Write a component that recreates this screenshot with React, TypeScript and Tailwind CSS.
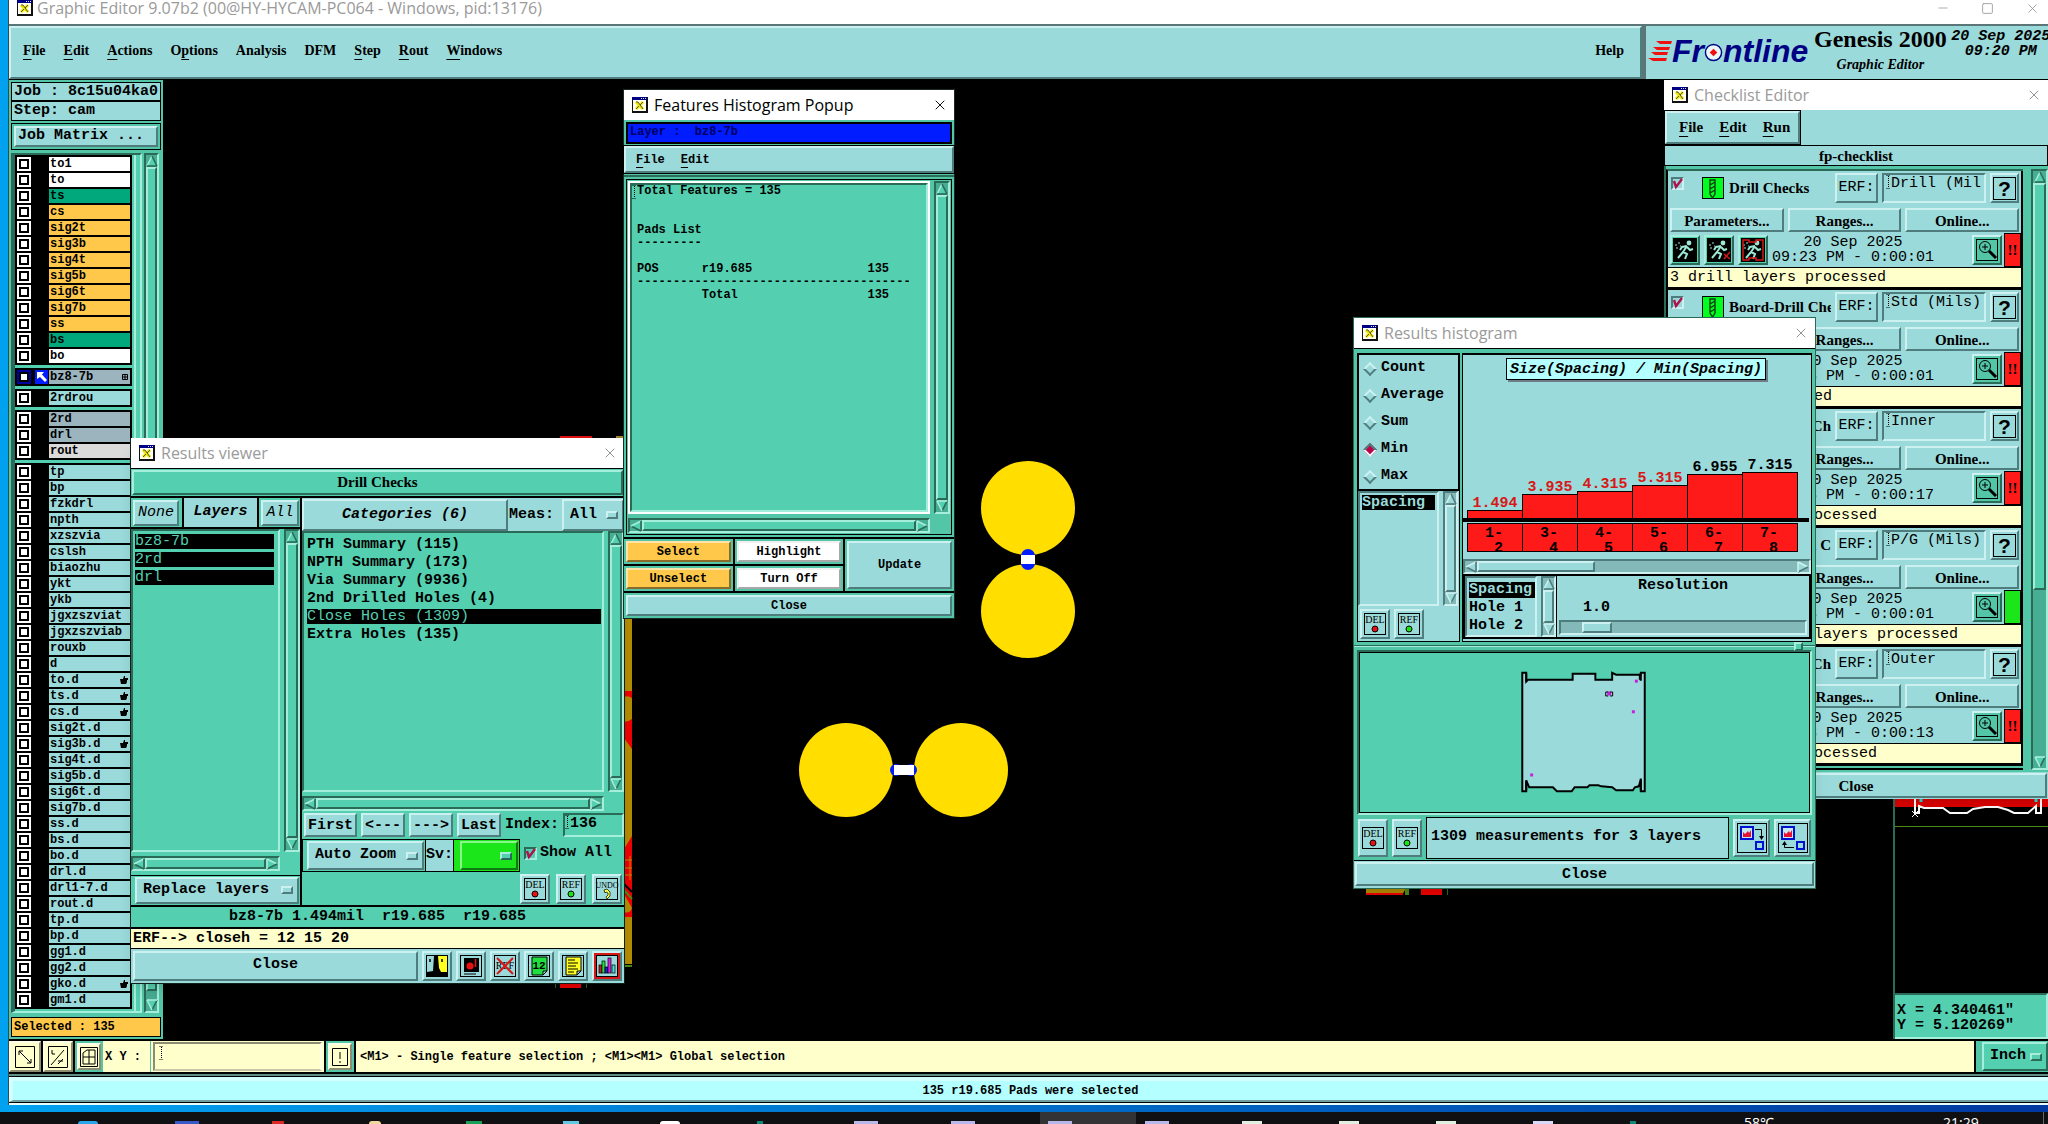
import React from 'react';
import { Minus, Square, X } from 'lucide-react';

const cyanUp = 'border-2 border-t-[#cdf1f1] border-l-[#cdf1f1] border-b-[#4f7d7d] border-r-[#4f7d7d] bg-[#9bdada]';
const cyanDown = 'border-2 border-t-[#4f7d7d] border-l-[#4f7d7d] border-b-[#cdf1f1] border-r-[#cdf1f1] bg-[#9bdada]';
const greenUp = 'border-2 border-t-[#a5eedb] border-l-[#a5eedb] border-b-[#2a6b58] border-r-[#2a6b58] bg-[#54d0b0]';
const greenDown = 'border-2 border-t-[#2a6b58] border-l-[#2a6b58] border-b-[#a5eedb] border-r-[#a5eedb] bg-[#54d0b0]';
const creamUp = 'border-2 border-t-[#ffffe8] border-l-[#ffffe8] border-b-[#8d8d72] border-r-[#8d8d72] bg-[#ffffcc]';
const orangeUp = 'border-2 border-t-[#ffe3a8] border-l-[#ffe3a8] border-b-[#8a6b2a] border-r-[#8a6b2a] bg-[#ffc84b]';
const whiteUp = 'border-2 border-t-[#f0f0f0] border-l-[#f0f0f0] border-b-[#a8a8a8] border-r-[#a8a8a8] bg-white';
const serif = "font-['Liberation_Serif',serif] font-bold";

type Tone = 'green' | 'cyan';

const Arrow: React.FC<{ dir: 'up' | 'down' | 'left' | 'right'; tone: Tone }> = ({ dir, tone }) => {
  const turn = { up: 0, right: 90, down: 180, left: 270 }[dir];
  const dark = tone === 'green' ? '#2a6b58' : '#4f7d7d';
  const light = tone === 'green' ? '#a5eedb' : '#cdf1f1';
  return (
    <svg viewBox="0 0 12 12" className="size-3 shrink-0" aria-hidden="true">
      <g transform={`rotate(${turn} 6 6)`}>
        <path d="M6 1 L11 11 H1 Z" fill={tone === 'green' ? '#54d0b0' : '#9bdada'} />
        <path d="M6 1 L1 11" stroke={dir === 'up' || dir === 'right' ? light : dark} strokeWidth="1.6" />
        <path d="M6 1 L11 11" stroke={dir === 'left' || dir === 'down' ? light : dark} strokeWidth="1.6" />
        <path d="M1 11 H11" stroke={dir === 'up' || dir === 'left' ? dark : light} strokeWidth="1.6" />
      </g>
    </svg>
  );
};

const VScroll: React.FC<{ tone?: Tone; thumb?: string; className?: string }> = ({ tone = 'green', thumb = 'h-full', className = 'w-4' }) => (
  <div className={`flex shrink-0 flex-col items-center ${tone === 'green' ? greenDown : cyanDown} ${className}`}>
    <div className={`flex w-full flex-1 flex-col items-center ${tone === 'green' ? 'bg-[#47ad93]' : 'bg-[#84b9b9]'}`}>
      <Arrow dir="up" tone={tone} />
      <div className="w-full flex-1">
        <div className={`w-full ${thumb} ${tone === 'green' ? greenUp : cyanUp}`} />
      </div>
      <Arrow dir="down" tone={tone} />
    </div>
  </div>
);

const HScroll: React.FC<{ tone?: Tone; thumb?: string; className?: string }> = ({ tone = 'green', thumb = 'w-full', className = '' }) => (
  <div className={`flex h-[15px] shrink-0 ${tone === 'green' ? greenDown : cyanDown} ${className}`}>
    <div className={`flex h-full flex-1 items-center ${tone === 'green' ? 'bg-[#47ad93]' : 'bg-[#84b9b9]'}`}>
      <Arrow dir="left" tone={tone} />
      <div className="h-full flex-1">
        <div className={`h-full ${thumb} ${tone === 'green' ? greenUp : cyanUp}`} />
      </div>
      <Arrow dir="right" tone={tone} />
    </div>
  </div>
);

const AppIcon = () => (
  <svg viewBox="0 0 16 16" className="size-4 shrink-0" aria-hidden="true">
    <rect width="16" height="16" fill="#111" />
    <rect width="15" height="3" fill="#000084" />
    <path d="M9 1.5 H14" stroke="#ddd" strokeDasharray="1 1" />
    <rect x="1" y="3" width="13" height="11" fill="#fffff4" />
    <path d="M4 5 L11 12 M11 5 L4 12" stroke="#f0e800" strokeWidth="3" />
    <path d="M4 5 H6 L11 12 M11 5 L8 8 M7 9 L4 12" fill="none" stroke="#333" strokeWidth="0.8" />
  </svg>
);

const TitleBar: React.FC<{ title: string; active?: boolean }> = ({ title, active }) => (
  <div className="flex h-[30px] items-center gap-1.5 bg-white pr-1.5 pl-2 font-['Open_Sans',sans-serif] text-[16px] font-normal">
    <AppIcon />
    <span className={`flex-1 whitespace-nowrap ${active ? 'text-black' : 'text-[#9a9a9a]'}`}>{title}</span>
    <button aria-label="Close window" className={active ? 'text-black' : 'text-[#8a8a8a]'}>
      <X size={16} strokeWidth={1.4} />
    </button>
  </div>
);

const Knob: React.FC<{ tone?: Tone }> = ({ tone = 'cyan' }) => (
  <span className={`h-2 w-3 shrink-0 ${tone === 'green' ? greenUp : cyanUp}`} />
);

const OptionMenu: React.FC<{ label: string; value: string; look?: string; tone?: Tone; className?: string }> = ({
  label, value, look = cyanUp, tone = 'cyan', className = '',
}) => (
  <div className={`flex items-center pr-1 pl-1.5 ${look} ${className}`}>
    <select aria-label={label} className="min-w-0 flex-1 appearance-none bg-transparent text-[15px] font-bold">
      <option>{value}</option>
    </select>
    <Knob tone={tone} />
  </div>
);

const Beam = () => (
  <svg viewBox="0 0 5 14" className="h-3.5 w-[5px] shrink-0" aria-hidden="true">
    <path d="M0.5 0.5 H4.5 M0.5 13.5 H4.5 M2.5 1 V13" stroke="#000" strokeWidth="1" strokeDasharray="1 1" />
  </svg>
);

const Tick: React.FC<{ label: string; look: string }> = ({ label, look }) => (
  <span className="grid shrink-0">
    <input type="checkbox" defaultChecked aria-label={label} className={`col-start-1 row-start-1 size-[13px] appearance-none ${look}`} />
    <svg viewBox="0 0 13 13" className="pointer-events-none col-start-1 row-start-1 size-[13px]" aria-hidden="true">
      <path d="M3 4 L5 10 L11 2" fill="none" stroke="#b0104c" strokeWidth="2.4" />
    </svg>
  </span>
);

const TagIcon: React.FC<{ tag: string; dot?: string }> = ({ tag, dot }) => (
  <svg viewBox="0 0 24 24" className="size-6" aria-hidden="true">
    <rect x="1.5" y="1.5" width="21" height="21" fill="none" stroke="#000" />
    <text x="12" y="11" textAnchor="middle" fontSize={dot ? 10 : 8} className="font-['Liberation_Serif',serif] font-normal">{tag}</text>
    {dot ? (
      <circle cx="12" cy="17" r="3" fill={dot} stroke="#000" />
    ) : (
      <path d="M9 13 L12 12 L15 15 V19 L12 22 L11 20 L13 18 V16 L11 15 L10 16 Z" fill="#ffff3c" stroke="#000" strokeWidth="0.7" />
    )}
  </svg>
);

const IconButton: React.FC<{ label: string; className?: string; children: React.ReactNode }> = ({ label, className = 'h-[30px] w-[30px]', children }) => (
  <button aria-label={label} className={`flex shrink-0 items-center justify-center ${cyanUp} ${className}`}>
    {children}
  </button>
);

// '_' marks the mnemonic letter of an entry
const Menu: React.FC<{ items: string[]; className: string }> = ({ items, className }) => (
  <nav className={`flex items-center ${className}`}>
    {items.map((item) => {
      const at = item.indexOf('_');
      if (at < 0) return <button key={item}>{item}</button>;
      return (
        <button key={item}>
          {item.slice(0, at)}<u className="underline-offset-4">{item[at + 1]}</u>{item.slice(at + 2)}
        </button>
      );
    })}
  </nav>
);

/* ---------- layer list ---------- */

interface Layer { name: string; color: string; hand?: boolean; active?: boolean }

const white = 'bg-white';
const mask = 'bg-[#00a87c]';
const signal = 'bg-[#ffc84b]';
const drill = 'bg-[#9bb4be]';
const misc = 'bg-[#9bdada]';

const groups: Layer[][] = [
  [
    { name: 'to1', color: white }, { name: 'to', color: white }, { name: 'ts', color: mask },
    { name: 'cs', color: signal }, { name: 'sig2t', color: signal }, { name: 'sig3b', color: signal },
    { name: 'sig4t', color: signal }, { name: 'sig5b', color: signal }, { name: 'sig6t', color: signal },
    { name: 'sig7b', color: signal }, { name: 'ss', color: signal }, { name: 'bs', color: mask },
    { name: 'bo', color: white },
  ],
  [{ name: 'bz8-7b', color: drill, active: true }],
  [{ name: '2rdrou', color: misc }],
  [{ name: '2rd', color: drill }, { name: 'drl', color: drill }, { name: 'rout', color: 'bg-[#dadada]' }],
  [
    'tp', 'bp', 'fzkdrl', 'npth', 'xzszvia', 'cslsh', 'biaozhu', 'ykt', 'ykb', 'jgxzszviat', 'jgxzszviab',
    'rouxb', 'd', 'to.d', 'ts.d', 'cs.d', 'sig2t.d', 'sig3b.d', 'sig4t.d', 'sig5b.d', 'sig6t.d', 'sig7b.d',
    'ss.d', 'bs.d', 'bo.d', 'drl.d', 'drl1-7.d', 'rout.d', 'tp.d', 'bp.d', 'gg1.d', 'gg2.d', 'gko.d', 'gm1.d',
  ].map((name) => ({ name, color: misc, hand: ['to.d', 'ts.d', 'cs.d', 'sig3b.d', 'gko.d'].includes(name) })),
];

const LayerRow: React.FC<{ layer: Layer }> = ({ layer }) => (
  <li className="flex h-4 items-center">
    <input
      type="checkbox"
      aria-label={layer.name}
      className={`mr-1 size-3.5 appearance-none border-2 bg-white shadow-[inset_0_0_0_2px_#000] ${layer.active ? 'border-[#0000a0]' : 'border-white'}`}
    />
    {layer.active ? (
      <span className="mr-px flex h-3.5 w-[13px] bg-[#001cff]">
        <svg viewBox="0 0 13 14" className="h-3.5 w-[13px]" aria-hidden="true">
          <path d="M2 2 H9 L7 4.5 L12 10 L10 12 L5 7 L2 9 Z" fill="#fff" />
        </svg>
      </span>
    ) : (
      <span className="w-3.5" />
    )}
    <span className={`flex h-3.5 flex-1 items-center justify-between overflow-hidden pl-px text-[12px] leading-[14px] ${layer.color}`}>
      {layer.name}
      {layer.hand && (
        <svg viewBox="0 0 8 8" className="mr-0.5 size-2" aria-hidden="true">
          <path d="M0 3 L3 3 L4 0 H5 L5 2 H8 V4 H7 V6 L6 8 H1 Z" />
        </svg>
      )}
      {layer.active && (
        <svg viewBox="0 0 6 6" className="mr-0.5 size-1.5" aria-hidden="true">
          <path d="M0.5 0.5 H5.5 V5.5 H0.5 Z M3 0.5 V5.5 M0.5 3 H5.5" fill="none" stroke="#000" />
        </svg>
      )}
    </span>
  </li>
);

const Sidebar = () => (
  <aside className="flex w-[154px] shrink-0 flex-col bg-[#54c6a8] px-0.5 pt-0.5 font-bold">
    <div className="h-[19px] border border-black bg-[#9bdada] pl-0.5 text-[15px] leading-[17px] whitespace-nowrap">Job : 8c15u04ka0</div>
    <div className="h-5 border border-black bg-[#9bdada] pl-0.5 text-[15px] leading-[17px]">Step: cam</div>
    <div className="mt-0.5 h-[27px] border border-black p-0.5">
      <button className={`flex size-full items-center pl-0.5 text-[15px] ${cyanUp}`}>Job Matrix ...</button>
    </div>
    <div className="mt-[3px] flex min-h-0 flex-1 gap-0.5">
      <div className={`min-w-0 flex-1 overflow-hidden ${greenDown} border-l-4`}>
        <div className="mr-1 flex h-full flex-col gap-[3px] border-r-2 border-[#a5eedb] pr-0.5">
          {groups.map((group) => (
            <ul key={group[0].name} className="bg-black px-0.5 py-px">
              {group.map((layer) => <LayerRow key={layer.name} layer={layer} />)}
            </ul>
          ))}
        </div>
      </div>
      <VScroll thumb="h-[99%]" className="mr-0.5 w-[15px]" />
    </div>
    <div className="mt-1 mb-0.5 h-5 border border-black bg-[#ffc84b] pl-0.5 text-[12px] leading-[18px]">Selected : 135</div>
  </aside>
);

/* ---------- main canvas ---------- */

const Canvas = () => (
  <div className="relative min-w-0 flex-1 overflow-hidden bg-black">
    <svg className="absolute inset-0 size-full" aria-hidden="true">
      <g transform="translate(-163 -80)">
        <g fill="#ffde00">
          <circle cx="1028" cy="508" r="47" />
          <circle cx="1028" cy="611" r="47" />
          <circle cx="846" cy="770" r="47" />
          <circle cx="961" cy="770" r="47" />
        </g>
        <circle cx="1028" cy="556" r="7" fill="#001cff" />
        <circle cx="1028" cy="563" r="7" fill="#001cff" />
        <rect x="1021" y="555" width="14" height="9" fill="#fff" />
        <circle cx="896" cy="770" r="6" fill="#001cff" />
        <circle cx="911" cy="770" r="6" fill="#001cff" />
        <rect x="894" y="765" width="20" height="10" fill="#fff" />
        <rect x="560" y="436" width="32" height="3" fill="#e01010" />
        <rect x="616" y="436" width="8" height="3" fill="#a08030" />
        <rect x="618" y="600" width="14" height="364" fill="#b48c00" />
        <g fill="#e00">
          <path d="M624 691 H632 V698 Q628 695 624 697 Z" />
          <path d="M624 722 Q628 722 632 719 V749 L624 738 Z" />
          <path d="M624 849 L632 836 V917 H624 V912 Q630 914 632 908 L624 894 Z" />
        </g>
        <path d="M624 860 H632 M624 868 H632 M630 856 V880 M624 875 H632" stroke="#b48c00" />
        <path d="M624 884 L632 892" stroke="#000" strokeWidth="2" />
        <path d="M624 890 L632 899 M618 966 H632" stroke="#4c8a14" strokeWidth="2" />
        <rect x="560" y="975" width="21" height="13" fill="#f00000" />
        <path d="M555.5 975 V988 M586.5 975 V988" stroke="#2e6a10" />
        <path d="M1366 880 H1405 V890 L1402 895 H1366 Z" fill="#b48c00" />
        <rect x="1366" y="893" width="37" height="2" fill="#e00" />
        <rect x="1405" y="880" width="4" height="15" fill="#4c8a14" />
        <rect x="1421" y="880" width="21" height="15" fill="#f00000" />
        <path d="M1447.5 880 V895" stroke="#2e6a10" />
      </g>
    </svg>
  </div>
);

const Overview = () => (
  <div className="flex w-[155px] shrink-0 flex-col border-l-2 border-[#2a6b58] bg-black">
    <svg className="min-h-0 w-full flex-1" aria-hidden="true">
      <g transform="translate(-1895 -80)">
        <rect x="1895" y="780" width="153" height="27" fill="#e00000" />
        <path d="M1921 780 V802 M2036 780 V802" stroke="#30d8d8" strokeWidth="3" />
        <path
          d="M1915 780 V813 H1919 V806 L1924 808 H1943 L1950 813 H1967 L1973 809 L1985 807 H1998 L2008 810 L2014 813 H2028 L2036 806 V813 H2041 V780"
          fill="none" stroke="#fff" strokeWidth="2"
        />
        <path d="M1912 811 L1918 817 M1918 811 L1912 817" stroke="#fff" />
        <path d="M1895 826.5 H2048" stroke="#4c8a14" />
      </g>
    </svg>
    <div className={`h-[46px] pt-2 pl-0.5 text-[15px] leading-[15px] font-bold whitespace-pre ${greenDown} border-l-0`}>
      X = 4.340461&quot;{'\n'}Y = 5.120269&quot;
    </div>
  </div>
);

/* ---------- windows ---------- */

const report = [
  'Total Features = 135', '', '', 'Pads List', '---------', '',
  'POS      r19.685                135',
  '--------------------------------------',
  '         Total                  135',
].join('\n');

const FeaturesPopup = () => (
  <section className="absolute top-[89px] left-[623px] w-[332px] border border-[#1a2a26] bg-[#54c6a8] text-[12px] font-bold">
    <TitleBar title="Features Histogram Popup" active />
    <div className="p-0.5">
      <div className="h-[22px] border-2 border-black bg-[#001cff] pl-0.5 leading-[17px] whitespace-pre text-[#000060]">Layer :  bz8-7b</div>
    </div>
    <div className={`h-[27px] outline outline-black ${cyanUp}`}>
      <Menu items={['_File', '_Edit']} className="h-full gap-4 pl-2.5 text-[12px]" />
    </div>
    <div className="mt-0.5 border-t-2 border-t-[#2a6b58] p-0.5">
      <div className="border border-black p-px">
        <div className="flex h-[333px] gap-1">
          <div className="min-w-0 flex-1 border-2 border-white">
            <div className={`flex size-full ${greenDown}`}>
              <Beam />
              <pre className="font-['Liberation_Mono',monospace] leading-[13px]">{report}</pre>
            </div>
          </div>
          <VScroll />
        </div>
        <HScroll className="mt-1 mr-5" />
      </div>
    </div>
    <div className="grid grid-cols-3 gap-x-0.5 border-y-2 border-black bg-black">
      <div className="grid gap-y-0.5">
        <div className="bg-[#54c6a8] p-0.5"><button className={`h-[21px] w-full ${orangeUp}`}>Select</button></div>
        <div className="bg-[#54c6a8] p-0.5"><button className={`h-[21px] w-full ${orangeUp}`}>Unselect</button></div>
      </div>
      <div className="grid gap-y-0.5">
        <div className="bg-[#54c6a8] p-0.5"><button className={`h-[21px] w-full ${whiteUp}`}>Highlight</button></div>
        <div className="bg-[#54c6a8] p-0.5"><button className={`h-[21px] w-full ${whiteUp}`}>Turn Off</button></div>
      </div>
      <div className="flex bg-[#54c6a8] p-0.5"><button className={`flex-1 ${cyanUp}`}>Update</button></div>
    </div>
    <div className="p-0.5"><button className={`h-[21px] w-full ${cyanUp}`}>Close</button></div>
  </section>
);

const categories = ['PTH Summary (115)', 'NPTH Summary (173)', 'Via Summary (9936)', '2nd Drilled Holes (4)', 'Close Holes (1309)', 'Extra Holes (135)'];

const ResultsViewer = () => (
  <section className="absolute top-[438px] left-[130px] w-[495px] border-x border-b border-[#12201c] bg-[#54d0b0] text-[15px] font-bold shadow-lg">
    <TitleBar title="Results viewer" />
    <div className="border-t border-b-2 border-black p-px">
      <div className={`h-[25px] text-center leading-[21px] ${serif} ${greenUp}`}>Drill Checks</div>
    </div>
    <div className="flex border-b-2 border-black">
      <div className="flex w-[171px] flex-col border-r-2 border-black">
        <div className="flex h-[31px] border-b-2 border-black">
          <div className="pt-0.5 pr-[3px] pl-0.5"><button className={`h-[26px] w-[46px] font-normal italic ${cyanUp}`}>None</button></div>
          <div className="flex flex-1 items-center justify-center border-x-2 border-black bg-[#9bdada] italic">Layers</div>
          <div className="pt-0.5 pr-px pl-0.5"><button className={`h-[26px] w-[38px] font-normal italic ${cyanUp}`}>All</button></div>
        </div>
        <div className="flex h-[323px] gap-1">
          <ul className={`flex min-w-0 flex-1 flex-col gap-[3px] pt-[3px] pr-1 pl-0.5 ${greenDown}`}>
            {['bz8-7b', '2rd', 'drl'].map((name) => (
              <li key={name} className="h-[15px] bg-black leading-[15px] font-normal text-[#54d0b0]">{name}</li>
            ))}
          </ul>
          <VScroll />
        </div>
        <HScroll className="my-1 mr-5" />
        <div className="flex flex-1 border-t border-black py-px pr-px pl-1">
          <OptionMenu label="Layer mode" value="Replace layers" className="flex-1" />
        </div>
      </div>
      <div className="flex min-w-0 flex-1 flex-col">
        <div className="flex h-[33px] bg-[#9bdada] pt-px">
          <button className={`flex-1 italic ${cyanUp}`}>Categories (6)</button>
          <span className="flex items-center pl-px">Meas:</span>
          <OptionMenu label="Meas" value="All" className="ml-2 w-[62px]" />
        </div>
        <div className="flex h-[261px] gap-1">
          <ul className={`flex min-w-0 flex-1 flex-col gap-[3px] pt-1 pr-px pl-[3px] ${greenDown}`}>
            {categories.map((name) => (
              <li key={name} className={`h-[15px] leading-[15px] ${name.startsWith('Close') ? 'bg-black font-normal text-[#54d0b0]' : ''}`}>{name}</li>
            ))}
          </ul>
          <VScroll />
        </div>
        <HScroll className="mt-1 mr-5" />
        <div className="mt-0.5 flex h-6 items-center gap-1 pl-0.5">
          <button className={`h-6 w-[53px] ${cyanUp}`}>First</button>
          <button className={`h-6 w-[44px] ${cyanUp}`}>&lt;---</button>
          <button className={`h-6 w-[44px] ${cyanUp}`}>---&gt;</button>
          <button className={`h-6 w-[44px] ${cyanUp}`}>Last</button>
          <label htmlFor="index">Index:</label>
          <div className={`flex h-6 min-w-0 flex-1 ${greenDown}`}>
            <Beam />
            <input id="index" defaultValue="136" className="h-[18px] w-full min-w-0 font-bold" />
          </div>
        </div>
        <div className="mt-0.5 flex h-[33px] items-stretch">
          <div className="flex border border-black py-px pr-px pl-1"><OptionMenu label="Zoom mode" value="Auto Zoom" className="w-[117px]" /></div>
          <span className="flex items-center border-y border-black bg-[#9bdada]">Sv:</span>
          <div className="flex border border-black bg-[#1ae61a] p-px pl-1.5">
            <div className="flex w-[58px] items-center justify-end border-2 border-t-[#8bf58b] border-r-[#0f7a0f] border-b-[#0f7a0f] border-l-[#8bf58b] pr-1">
              <select aria-label="Severity" className="w-9 appearance-none"><option></option></select>
              <Knob tone="green" />
            </div>
          </div>
          <span className="ml-1 flex items-center gap-[3px] pb-1 whitespace-nowrap"><Tick label="Show All" look={greenDown} />Show All</span>
        </div>
        <div className="mt-0.5 flex justify-end gap-1.5 pr-0.5">
          <IconButton label="Delete"><TagIcon tag="DEL" dot="#e81010" /></IconButton>
          <IconButton label="Reference"><TagIcon tag="REF" dot="#14e614" /></IconButton>
          <IconButton label="Undo"><TagIcon tag="UNDO" /></IconButton>
        </div>
      </div>
    </div>
    <div className="h-[22px] border-b-2 border-black text-center leading-5 whitespace-pre">bz8-7b 1.494mil  r19.685  r19.685</div>
    <div className="h-5 border-b border-black bg-[#ffffcc] pl-0.5 leading-[19px]">ERF--&gt; closeh = 12 15 20</div>
    <div className="flex h-[34px] gap-1 bg-[#9bdada] p-0.5">
      <button className={`flex-1 ${cyanUp}`}>Close</button>
      <IconButton label="Compare">
        <svg viewBox="0 0 24 24" className="size-6"><rect x="1.500" y="1.500" width="21" height="21" fill="#ffff20" stroke="#000" /><rect x="2" y="2" width="9" height="16" fill="#9bdada" /><path d="M9 2 H13 L14 14 L16 18 H22 V22 H2 V18 L8 17 Z" /><path d="M5 5 V8 M17 5 V8" stroke="#000" strokeWidth="1.500" /></svg>
      </IconButton>
      <IconButton label="Snapshot">
        <svg viewBox="0 0 24 24" className="size-6"><rect x="1.500" y="1.500" width="21" height="21" fill="none" stroke="#000" /><rect x="5" y="4" width="15" height="14" /><circle cx="11" cy="12" r="3.500" fill="#e81010" /><path d="M16.500 5 V13" stroke="#e81010" strokeWidth="1.500" /><path d="M5 20 H17" stroke="#000" /></svg>
      </IconButton>
      <IconButton label="Clear reference">
        <svg viewBox="0 0 24 24" className="size-6"><rect x="1.500" y="1.500" width="21" height="21" fill="none" stroke="#000" /><text x="12" y="15" textAnchor="middle" fontSize="10" className="font-['Liberation_Serif',serif] font-normal">REF</text><path d="M4 4 L20 20 M20 4 L4 20" stroke="#d81818" strokeWidth="2" /></svg>
      </IconButton>
      <IconButton label="Numbers">
        <svg viewBox="0 0 24 24" className="size-6"><rect x="1.500" y="1.500" width="21" height="21" fill="none" stroke="#000" /><path d="M5 3 H20 V17 L16 21 H5 Z M20 17 H16 V21" fill="#20e040" stroke="#000" /><text x="12" y="15" textAnchor="middle" fontSize="11" fontWeight="bold">12</text></svg>
      </IconButton>
      <IconButton label="Notes">
        <svg viewBox="0 0 24 24" className="size-6"><rect x="1.500" y="1.500" width="21" height="21" fill="none" stroke="#000" /><path d="M5 3 H20 V17 L16 21 H5 Z M20 17 H16 V21" fill="#ffff20" stroke="#000" /><path d="M7 6 H14 M7 9 H17 M7 12 H15 M7 15 H17 M7 18 H13" stroke="#000" /></svg>
      </IconButton>
      <IconButton label="Histogram">
        <svg viewBox="0 0 26 26" className="size-[26px]"><rect width="26" height="26" fill="#d81818" /><rect x="2.500" y="2.500" width="21" height="21" fill="#9bdada" stroke="#000" /><g stroke="#000" strokeWidth="0.700"><rect x="5" y="12" width="3" height="8" fill="#c02020" /><rect x="8" y="8" width="3" height="12" fill="#20e040" /><rect x="11" y="14" width="3" height="6" fill="#2020e0" /><rect x="14" y="5" width="3" height="15" fill="#e020e0" /><rect x="18" y="12" width="3" height="8" fill="#40e0e0" /></g></svg>
      </IconButton>
    </div>
  </section>
);

const bars = [
  { range: ['1-', '2'], label: '1.494', top: 510, bad: true },
  { range: ['3-', '4'], label: '3.935', top: 494, bad: true },
  { range: ['4-', '5'], label: '4.315', top: 491, bad: true },
  { range: ['5-', '6'], label: '5.315', top: 485, bad: true },
  { range: ['6-', '7'], label: '6.955', top: 474, bad: false },
  { range: ['7-', '8'], label: '7.315', top: 472, bad: false },
];

const BarChart = () => (
  <svg className="h-[204px] w-full" aria-label="Spacing histogram">
    <g transform="translate(-1464 -355)" fontSize="15" fontWeight="bold">
      {bars.map((bar, i) => {
        const x = 1468 + i * 55;
        return (
          <g key={bar.label}>
            <rect x={x + 0.5} y={bar.top + 0.5} width="55" height={519 - bar.top} fill="#ff1a1a" stroke="#000" />
            <text x={x + 28} y={bar.top - 3} textAnchor="middle" fill={bar.bad ? '#d81818' : '#000'}>{bar.label}</text>
            <rect x={x + 0.5} y="523.5" width="55" height="28" fill="#ff1a1a" stroke="#000" />
            <text x={x + 18} y="537">{bar.range[0]}</text>
            <text x={x + 27} y="552">{bar.range[1]}</text>
          </g>
        );
      })}
      <rect x="1464" y="518" width="346" height="4" />
    </g>
  </svg>
);

const ResultsHistogram = () => (
  <section className="absolute top-[317px] left-[1353px] w-[463px] border border-[#2a6b58] bg-[#54c6a8] text-[15px] font-bold shadow-lg">
    <TitleBar title="Results histogram" />
    <div className="flex gap-0.5 border-t border-black px-[3px] pt-1">
      <div className="flex w-[103px] flex-col bg-[#9bdada]">
        <fieldset className="flex h-[138px] flex-col border-2 border-black pl-0.5">
          {['Count', 'Average', 'Sum', 'Min', 'Max'].map((name) => (
            <label key={name} className="flex h-[27px] items-center gap-1.5 pl-1">
              <input
                type="radio"
                name="stat"
                defaultChecked={name === 'Min'}
                className="size-[10px] rotate-45 appearance-none border-2 border-t-[#cdf1f1] border-r-[#4f7d7d] border-b-[#4f7d7d] border-l-[#cdf1f1] checked:border-t-[#4f7d7d] checked:border-r-[#e8fafa] checked:border-b-[#e8fafa] checked:border-l-[#4f7d7d] checked:bg-[#c00048]"
              />
              {name}
            </label>
          ))}
        </fieldset>
        <div className="border border-t-0 border-black">
          <div className="flex h-[115px] gap-1 pr-px">
            <div className={`min-w-0 flex-1 p-0.5 ${cyanDown}`}>
              <div className="h-[15px] bg-black leading-[15px] text-[#9bdada]">Spacing</div>
            </div>
            <VScroll tone="cyan" className="w-[15px]" />
          </div>
          <div className="flex h-[35px] items-center gap-1 pl-0.5">
            <IconButton label="Delete"><TagIcon tag="DEL" dot="#e81010" /></IconButton>
            <IconButton label="Reference"><TagIcon tag="REF" dot="#14e614" /></IconButton>
          </div>
        </div>
      </div>
      <div className="min-w-0 flex-1 border border-t-2 border-black bg-[#9bdada]">
        <div className="relative">
          <div className="absolute top-[3px] left-[43px] h-[22px] border border-black bg-[#b4ffff] px-[3px] leading-[22px] whitespace-nowrap italic shadow-[2px_2px_0_#6d7d85]">
            Size(Spacing) / Min(Spacing)
          </div>
          <BarChart />
        </div>
        <HScroll tone="cyan" thumb="w-[37%]" />
        <div className="flex h-[65px] border-2 border-black">
          <ul className={`w-[72px] overflow-hidden pt-1 pl-0.5 leading-[18px] ${cyanDown}`}>
            <li className="mb-px h-4 bg-black leading-4 text-[#9bdada]">Spacing</li>
            <li>Hole 1</li>
            <li>Hole 2</li>
          </ul>
          <VScroll tone="cyan" className="ml-1 w-[15px]" />
          <div className="flex min-w-0 flex-1 flex-col border-l border-black px-0.5">
            <label htmlFor="res" className="text-center leading-5">Resolution</label>
            <output htmlFor="res" className="h-6 pl-6 leading-6">1.0</output>
            <input
              id="res"
              type="range"
              min="0"
              max="10"
              defaultValue="1"
              className="h-[15px] w-full appearance-none border-2 border-t-[#4f7d7d] border-r-[#cdf1f1] border-b-[#cdf1f1] border-l-[#4f7d7d] bg-[#84b9b9] [&::-webkit-slider-thumb]:h-[11px] [&::-webkit-slider-thumb]:w-[30px] [&::-webkit-slider-thumb]:appearance-none [&::-webkit-slider-thumb]:border-2 [&::-webkit-slider-thumb]:border-t-[#cdf1f1] [&::-webkit-slider-thumb]:border-r-[#4f7d7d] [&::-webkit-slider-thumb]:border-b-[#4f7d7d] [&::-webkit-slider-thumb]:border-l-[#cdf1f1] [&::-webkit-slider-thumb]:bg-[#9bdada]"
            />
          </div>
        </div>
      </div>
    </div>
    <div className="flex h-2 items-center">
      <span className="h-0.5 flex-1 border-t border-b border-t-[#2a6b58] border-b-[#a5eedb]" />
      <span className={`size-[9px] ${greenUp}`} />
      <span className="h-0.5 w-3 border-t border-b border-t-[#2a6b58] border-b-[#a5eedb]" />
    </div>
    <div className="px-[3px]">
      <div className={greenDown}>
        <svg viewBox="0 0 450 161" className="h-[161px] w-full border border-black" aria-hidden="true">
          <g transform="translate(-1360 -651)">
            <path
              d="M1522 671 H1526 V680 L1528 678 H1573 V672 H1596 V678 H1613 V671 L1617 673 H1641 V678 L1642 671 H1646 V791 H1642 V779 L1640 786 L1636 787 L1634 790 H1617 L1613 787 L1602 786 L1599 785 H1590 L1588 787 H1575 L1572 791 H1557 L1553 787 H1529 L1526 780 V791 H1522 Z"
              fill="#9bdada" stroke="#000" strokeWidth="2"
            />
            <path d="M1526 672 V680 M1526 780 V790 M1642 672 V679 M1642 778 V790" stroke="#000" strokeWidth="2" />
            <g fill="#c81ee0">
              <rect x="1636" y="678" width="3" height="3" />
              <rect x="1608" y="690" width="4" height="4" />
              <rect x="1633" y="709" width="3" height="3" />
              <rect x="1530" y="773" width="3" height="3" />
            </g>
            <path d="M1609 690.5 H1606.5 V694.5 H1609 M1611 690.5 H1613.5 V694.5 H1611" fill="none" stroke="#000" />
          </g>
        </svg>
      </div>
    </div>
    <div className="flex h-[46px] items-center gap-1 border-b border-black px-1">
      <IconButton label="Delete" className="h-[38px] w-[30px]"><TagIcon tag="DEL" dot="#e81010" /></IconButton>
      <IconButton label="Reference" className="h-[38px] w-[30px]"><TagIcon tag="REF" dot="#14e614" /></IconButton>
      <div className="flex h-[42px] flex-1 items-center border border-black bg-[#9bdada] pl-1 whitespace-nowrap">1309 measurements for 3 layers</div>
      <IconButton label="Copy to layer" className="h-[38px] w-[37px]">
        <svg viewBox="0 0 30 30" className="size-[30px]"><rect x="0.500" y="0.500" width="29" height="29" fill="none" stroke="#000" /><rect x="4" y="4" width="12" height="12" fill="#c8e8f0" stroke="#0010d0" strokeWidth="2" /><path d="M6 14 V9 L8 11 L11 8 L12 10 L14 7 V14 Z" fill="#e81030" /><rect x="19" y="19" width="7" height="7" fill="none" stroke="#0010d0" strokeWidth="2" /><path d="M18 6.500 H24.500 V13" fill="none" stroke="#000" /><path d="M22 13 H27 L24.500 17 Z" /></svg>
      </IconButton>
      <IconButton label="Copy from layer" className="h-[38px] w-[37px]">
        <svg viewBox="0 0 30 30" className="size-[30px]"><rect x="0.500" y="0.500" width="29" height="29" fill="none" stroke="#000" /><rect x="4" y="4" width="12" height="12" fill="#c8e8f0" stroke="#0010d0" strokeWidth="2" /><path d="M6 14 V9 L8 11 L11 8 L12 10 L14 7 V14 Z" fill="#e81030" /><rect x="19" y="19" width="7" height="7" fill="none" stroke="#0010d0" strokeWidth="2" /><path d="M16 24.500 H6.500 V21" fill="none" stroke="#000" /><path d="M4 22 H9 L6.500 18 Z" /></svg>
      </IconButton>
    </div>
    <div className="bg-[#9bdada] p-px"><button className={`h-6 w-full ${cyanUp}`}>Close</button></div>
  </section>
);

const checks = [
  { name: 'Drill Checks', erf: 'Drill (Mil', time: '0:00:01', note: '3 drill layers processed', ok: false },
  { name: 'Board-Drill Checks', erf: 'Std (Mils)', time: '0:00:01', note: '3 layers processed', ok: false },
  { name: 'Signal Layer Ch', erf: 'Inner', time: '0:00:17', note: '6 core layers processed', ok: false, tail: true },
  { name: 'Power/Ground C', erf: 'P/G (Mils)', time: '0:00:01', note: '12 power/ground layers processed', ok: true, tail: true },
  { name: 'Solder Mask Ch', erf: 'Outer', time: '0:00:13', note: '2 mask layers processed', ok: false, tail: true },
];

const Runner: React.FC<{ label: string; extra?: React.ReactNode }> = ({ label, extra }) => (
  <button aria-label={label} className={`flex size-[30px] items-center justify-center ${greenUp}`}>
    <svg viewBox="0 0 24 24" className="size-6">
      <rect width="24" height="24" />
      <circle cx="16" cy="5" r="2.4" fill="#9be8d4" />
      <path d="M14 8 L10 14 L14 16 L12 21 M10 14 L5 20 M14 8 L9 9 L7 12 M14 9 L17 12 L20 11" fill="none" stroke="#9be8d4" strokeWidth="2" />
      <path d="M2 7 H4 M5 5 H7 M3 10 H5 M7 8 H8" stroke="#9be8d4" />
      {extra}
    </svg>
  </button>
);

const ChecklistEditor = () => (
  <section className={`absolute top-20 right-0 w-96 bg-[#9bdada] text-[15px] ${serif} shadow-lg`}>
    <TitleBar title="Checklist Editor" />
    <div className="w-[137px] border border-black">
      <Menu items={['_File', '_Edit', '_Run']} className={`h-[33px] gap-4 pl-3 text-[15px] ${cyanUp}`} />
    </div>
    <div className="h-[21px] border border-black text-center leading-5">fp-checklist</div>
    <div className="flex h-[606px] gap-2 border-l-2 border-[#2a6b58] bg-[#54c6a8] pt-[3px] pb-0.5">
      <div className="min-w-0 flex-1 border-2 border-r-0 border-t-[#2a6b58] border-l-black">
        {checks.map((check) => (
          <article key={check.name} className="flex h-[119px] flex-col border-r-2 border-b-[3px] border-black bg-[#9bdada]">
            <div className="flex h-[36px] items-start pt-0.5 pr-0.5 pl-[3px]">
              <span className="mt-1"><Tick label={check.name} look={cyanDown} /></span>
              <svg viewBox="0 0 22 22" className="mt-1 ml-[18px] size-[22px] shrink-0" aria-hidden="true">
                <rect x="0.5" y="0.5" width="21" height="21" fill="#00ff20" stroke="#000" />
                <path d="M8 3 H13 V17 L10.5 21 L8 17 Z M8 8 L13 5 M8 12 L13 9 M8 16 L13 13" fill="none" stroke="#0a3a10" strokeWidth="1.4" />
              </svg>
              <span className={`mt-1.5 ml-[5px] flex min-w-0 flex-1 overflow-hidden leading-[18px] whitespace-nowrap ${check.tail ? 'justify-end' : ''}`}>{check.name}</span>
              <button className={`ml-1 h-[30px] w-[43px] shrink-0 font-['Liberation_Mono',monospace] font-normal ${cyanUp}`}>ERF:</button>
              <div className={`ml-1 flex h-[30px] w-[104px] shrink-0 pl-0.5 ${cyanDown}`}>
                <Beam />
                <input aria-label={`${check.name} ERF`} defaultValue={check.erf} className="h-[18px] w-full min-w-0 font-['Liberation_Mono',monospace] font-normal" />
              </div>
              <IconButton label="Help" className="ml-1 h-[30px] w-[29px]">
                <svg viewBox="0 0 23 23" className="size-[23px]"><rect x="0.5" y="0.5" width="22" height="22" fill="none" stroke="#000" /><text x="11.5" y="19" textAnchor="middle" fontSize="21" fontWeight="bold" className="font-['Liberation_Sans',sans-serif]">?</text></svg>
              </IconButton>
            </div>
            <div className="flex h-[26px] gap-1 px-0.5 pt-px">
              <button className={`h-6 flex-1 ${cyanUp}`}>Parameters...</button>
              <button className={`h-6 flex-1 ${cyanUp}`}>Ranges...</button>
              <button className={`h-6 flex-1 ${cyanUp}`}>Online...</button>
            </div>
            <div className="flex h-[34px] items-center gap-1 pl-0.5">
              <Runner label="Run" />
              <Runner label="Run on selection" extra={<path d="M17 16 L23 21 M23 14 L17 21" stroke="#d81818" strokeWidth="1.5" />} />
              <Runner label="Run in profile" extra={<path d="M2 2 H8 V4 H15 V2 H22 V22 H15 V20 H8 V22 H2 Z" fill="none" stroke="#d81818" strokeWidth="1.5" />} />
              <div className="mr-auto text-center font-['Liberation_Mono',monospace] leading-[15px] font-normal">
                20 Sep 2025<br />09:23 PM - {check.time}
              </div>
              <button aria-label="View results" className="flex size-[30px] items-center justify-center border-2 border-t-[#cdf1f1] border-r-[#2a6b58] border-b-[#2a6b58] border-l-[#cdf1f1] bg-[#54c6a8]">
                <svg viewBox="0 0 24 24" className="size-6"><rect x="1.5" y="1.5" width="21" height="21" fill="none" stroke="#000" /><circle cx="10" cy="9" r="5.5" fill="none" stroke="#000" /><path d="M10 6 V12 M7 9 H13" stroke="#000" /><path d="M14 13 L21 20" stroke="#000" strokeWidth="3" /></svg>
              </button>
              <span className={`-ml-0.5 flex h-[34px] w-[17px] items-center justify-center border border-black ${check.ok ? 'bg-[#1ae61a]' : 'bg-[#ff1a1a]'}`}>
                {check.ok ? '' : '!!'}
              </span>
            </div>
            <div className="flex-1 border-t border-black bg-[#ffffcc] pl-0.5 font-['Liberation_Mono',monospace] leading-[19px] font-normal whitespace-nowrap">{check.note}</div>
          </article>
        ))}
      </div>
      <VScroll thumb="h-[71%]" className="w-[17px]" />
    </div>
    <div className="p-px"><button className={`h-[25px] w-full ${cyanUp}`}>Close</button></div>
  </section>
);

/* ---------- header, footer ---------- */

const Header = () => (
  <header className="flex h-[55px] border-t-2 border-[#5b7676] bg-[#9bdada]">
    <div className={`flex min-w-0 flex-1 items-center justify-between pr-4 pb-1 pl-3 text-[14px] ${serif} ${cyanUp}`}>
      <Menu items={['_File', '_Edit', '_Actions', 'O_ptions', 'Analysis', 'DFM', '_Step', '_Rout', '_Windows']} className="gap-[18px]" />
      <button>Help</button>
    </div>
    <div className="flex w-[406px] shrink-0 items-center overflow-hidden border-l-4 border-[#5b7676]">
      <div className="flex items-center pb-1 pl-0.5">
        <svg viewBox="0 0 24 24" className="size-6" aria-hidden="true">
          <path d="M8 2 H24 L23 5 H12 Z M5 8 L22 8 L21 11 H9 Z M3 13 L20 13 L19 16 H7 Z M0 19 L19 19 L18 22 H5 Z" fill="#f01010" />
        </svg>
        <span className="flex items-center font-['Liberation_Sans',sans-serif] text-[32px] leading-none font-bold text-[#000084] italic">
          Fr
          <svg viewBox="0 0 20 20" className="mt-1 size-[19px]" aria-hidden="true">
            <circle cx="10" cy="10" r="8.5" fill="#e8f8f8" stroke="#000084" strokeWidth="1.5" />
            <path d="M10 6 L14 10 L10 14 L6 10 Z" fill="#f01010" />
          </svg>
          ntline
        </span>
      </div>
      <div className={`ml-0.5 flex w-[140px] shrink-0 flex-col items-center gap-1 pb-1 whitespace-nowrap ${serif}`}>
        <span className="text-[24px] leading-6">Genesis 2000</span>
        <span className="text-[14px] leading-5 italic">Graphic Editor</span>
      </div>
      <div className="w-[101px] shrink-0 self-start pt-[3px] text-center text-[15px] leading-[15px] font-bold italic">
        <span className="whitespace-nowrap">20 Sep 2025</span><br />09:20 PM
      </div>
    </div>
  </header>
);

const CommandBar = () => (
  <div className="flex h-[35px] border-y-2 border-black bg-[#ffffcc] text-[12px] font-bold">
    <div className="flex gap-0.5 bg-black">
      <button aria-label="Stretch" className={`flex w-8 items-center justify-center ${creamUp}`}>
        <svg viewBox="0 0 20 22" className="h-[22px] w-5"><path d="M0.5 0.5 H19.5 V21.5 H0.5 Z M4 5 L16 17 M4 9 V5 H8 M16 13 V17 H12" fill="none" stroke="#000" /></svg>
      </button>
      <button aria-label="Coordinates" className={`flex w-[30px] items-center justify-center ${creamUp}`}>
        <svg viewBox="0 0 20 22" className="h-[22px] w-5"><path d="M0.5 0.5 H19.5 V21.5 H0.5 Z M3 19 L16 4 M4 4 V8 H7 M10 15 H15 M10 18 L15 13" fill="none" stroke="#000" /></svg>
      </button>
      <div className="flex bg-[#54c6a8] p-0.5">
        <button aria-label="Grid" className={`flex w-6 items-center justify-center ${creamUp}`}>
          <svg viewBox="0 0 18 20" className="h-5 w-[18px]"><path d="M0.5 0.5 H17.5 V19.5 H0.5 Z M3 6 L7 3 H15 V17 H3 Z M9 3 V17 M3 10 H15" fill="none" stroke="#000" /></svg>
        </button>
      </div>
    </div>
    <label htmlFor="xy" className="flex w-12 items-center border-r border-[#54c6a8] pl-0.5 whitespace-nowrap">X Y :</label>
    <div className="my-px ml-0.5 flex w-[169px] border-2 border-t-[#8d8d72] border-r-[#ffffe8] border-b-[#c8c8a8] border-l-[#8d8d72] pt-0.5 pl-1">
      <Beam />
      <input id="xy" className="w-full min-w-0" />
    </div>
    <div className="ml-0.5 flex border-x-2 border-black bg-[#54c6a8] p-0.5">
      <button aria-label="Alert" className={`flex w-6 items-center justify-center ${creamUp}`}>
        <svg viewBox="0 0 16 18" className="h-[18px] w-4"><path d="M0.5 0.5 H15.5 V17.5 H0.5 Z M8 4 V11 M8 13 V15" fill="none" stroke="#000" /></svg>
      </button>
    </div>
    <p className="flex flex-1 items-center pl-1">&lt;M1&gt; - Single feature selection ; &lt;M1&gt;&lt;M1&gt; Global selection</p>
    <div className="flex w-[74px] border-l-2 border-black bg-[#54c6a8] py-px pl-1.5">
      <OptionMenu label="Units" value="Inch" look={greenUp} tone="green" className="flex-1" />
    </div>
  </div>
);

const tasks = [
  'w-5 rounded-t-full bg-[#28a8e8]', 'w-6 bg-[#3858c8]', 'w-3 bg-[#d82828]', 'w-3 rounded-t-full bg-[#f0d8a0]', 'w-4 bg-[#18a058]', 'w-4 bg-[#60c8e0]',
  'w-5 rounded-t bg-white', 'w-1.5 bg-[#108878]', 'w-6 bg-[#b8b8e8]', 'w-6 bg-[#b8b8e8]', 'w-6 bg-[#b8b8e8]', 'w-6 bg-[#b8b8e8]',
  'w-5 bg-[#e0f0e0]', 'w-5 bg-[#e0f0e0]', 'w-5 bg-[#e0f0e0]', 'w-5 bg-[#d8d8f8]', 'w-1.5 bg-[#108878]',
];

const Taskbar = () => (
  <footer className="flex h-3 items-start gap-px overflow-hidden bg-[#101012] pl-[70px] font-['Open_Sans',sans-serif] text-[14px] text-white">
    {tasks.map((look, i) => (
      <button key={i} aria-label={`Task ${i + 1}`} className={`flex h-3 w-24 items-end pl-2 ${i === 10 ? 'bg-[#333336]' : ''}`}>
        <span className={`h-[3px] ${look}`} />
      </button>
    ))}
    <span className="ml-[25px] w-[198px] pt-[3px] leading-4">58℃</span>
    <span className="flex-1 pt-[3px] leading-4">21:29</span>
    <span className="mr-1 h-3 w-px bg-[#666]" />
  </footer>
);

export default function App() {
  return (
    <div className="relative flex h-screen flex-col overflow-hidden bg-linear-to-r from-[#00a2f0] to-[#0038a0] font-['Liberation_Mono',monospace] text-black">
      <main className="ml-2 flex min-h-0 flex-1 flex-col border-l border-[#3a4a4a] bg-black">
        <div className="flex h-6 items-center gap-1 bg-white pb-2 pl-2 font-['Open_Sans',sans-serif] text-[16px] text-[#9a9a9a]">
          <AppIcon />
          <span className="flex-1">Graphic Editor 9.07b2 (00@HY-HYCAM-PC064 - Windows, pid:13176)</span>
          <div className="flex items-center gap-[31px] pr-2">
            <button aria-label="Minimize"><Minus size={14} strokeWidth={1.4} /></button>
            <button aria-label="Maximize"><Square size={13} strokeWidth={1.6} /></button>
            <button aria-label="Close"><X size={15} strokeWidth={1.4} /></button>
          </div>
        </div>
        <Header />
        <div className="mt-px flex min-h-0 flex-1">
          <Sidebar />
          <Canvas />
          <Overview />
        </div>
        <CommandBar />
        <div className="border-t-2 border-b-2 border-t-[#5f8f88] border-b-[#e8ffff] bg-black py-px">
          <div className="flex h-[25px] items-center justify-center border-t-4 border-b-2 border-l-4 border-t-[#d4ffff] border-b-[#6f9f9f] border-l-[#d4ffff] bg-[#b4ffff] text-[12px] font-bold">
            135 r19.685 Pads were selected
          </div>
        </div>
      </main>
      <div className="h-[7px] shrink-0" />
      <Taskbar />
      <ChecklistEditor />
      <ResultsHistogram />
      <ResultsViewer />
      <FeaturesPopup />
    </div>
  );
}
